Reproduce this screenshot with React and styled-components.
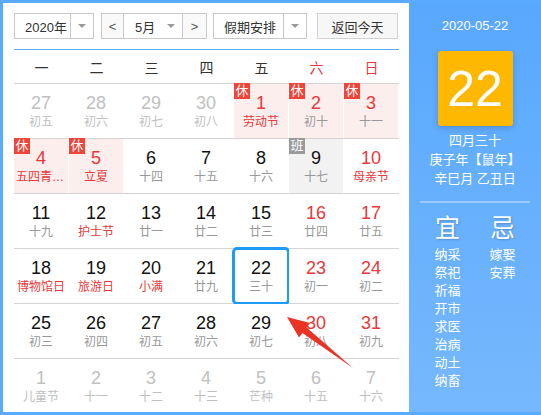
import React from 'react';
import styled, { createGlobalStyle } from 'styled-components';

const GlobalStyle = createGlobalStyle`
  html, body {
    margin: 0;
    padding: 0;
    background: #fff;
  }
  body {
    font-family: "Liberation Sans", "Noto Sans CJK SC", sans-serif;
  }
  * {
    box-sizing: border-box;
  }
`;

const BLUE = '#5aabff';
const RED = '#e8383a';

const Frame = styled.div`
  width: 541px;
  height: 415px;
  border: 3px solid ${BLUE};
  border-right: none;
  display: flex;
`;

const Main = styled.div`
  position: relative;
  width: 406px;
  height: 100%;
  background: #fff;
  padding: 10px 0 0 11px;
`;

const Toolbar = styled.div`
  display: flex;
  align-items: center;
  height: 26px;
  width: 385px;
`;

const SelectBox = styled.div`
  display: flex;
  height: 26px;
  width: ${(p) => p.$w}px;
  margin-right: ${(p) => p.$mr || 0}px;
  border: 1px solid #c9c9c9;
  background: #fff;
  font-size: 13px;
  color: #333;
`;

const SelectValue = styled.div`
  flex: 1;
  display: flex;
  align-items: center;
  padding-left: ${(p) => p.$pl || 10}px;
`;

const Caret = styled.div`
  width: ${(p) => p.$w || 23}px;
  display: flex;
  align-items: center;
  justify-content: center;
  border-left: ${(p) => (p.$inline ? 'none' : '1px solid #c9c9c9')};
  &::after {
    content: '';
    border-left: 4px solid transparent;
    border-right: 4px solid transparent;
    border-top: 4px solid #9a9a9a;
  }
`;

const NavBtn = styled.div`
  width: ${(p) => p.$w}px;
  display: flex;
  align-items: center;
  justify-content: center;
  background: #f9f9f9;
  color: #555;
  font-size: 13px;
  border-left: ${(p) => (p.$side === 'right' ? '1px solid #c9c9c9' : 'none')};
  border-right: ${(p) => (p.$side === 'left' ? '1px solid #c9c9c9' : 'none')};
`;

const TodayButton = styled.div`
  width: 81px;
  height: 26px;
  display: flex;
  align-items: center;
  justify-content: center;
  border: 1px solid #d2d2d2;
  background: #f7f7f7;
  color: #333;
  font-size: 13px;
`;

const Divider = styled.div`
  width: 385px;
  height: 1px;
  margin-top: 10px;
  background: ${BLUE};
`;

const WeekRow = styled.div`
  display: grid;
  grid-template-columns: repeat(7, 55px);
  width: 385px;
  height: 34px;
  border-bottom: 1px solid #d4d4d4;
`;

const WeekLabel = styled.div`
  display: flex;
  align-items: center;
  justify-content: center;
  font-size: 14px;
  color: ${(p) => (p.$weekend ? RED : '#333')};
`;

const DayRow = styled.div`
  display: grid;
  grid-template-columns: repeat(7, 55px);
  width: 385px;
  height: ${(p) => (p.$last ? 52 : 55)}px;
  border-bottom: ${(p) => (p.$last ? 'none' : '1px solid #d4d4d4')};
`;

const cellBg = (p) => {
  if (p.$rest) return '#fdeeee';
  if (p.$work) return '#f2f2f2';
  return '#fff';
};

const Cell = styled.div`
  position: relative;
  margin-right: 1px;
  padding-top: 9px;
  display: flex;
  flex-direction: column;
  align-items: center;
  background: ${cellBg};
  border-radius: ${(p) => (p.$today ? '3px' : '0')};
  outline: ${(p) => (p.$today ? '3px solid #1f9bf7' : 'none')};
  outline-offset: -1px;
  min-width: 0;
`;

const DayNum = styled.div`
  font-size: 18px;
  line-height: 20px;
  color: ${(p) => (p.$other ? '#c0c0c0' : p.$red ? RED : '#111')};
`;

const Lunar = styled.div`
  max-width: 100%;
  padding: 0 2px;
  font-size: 12px;
  line-height: 18px;
  white-space: nowrap;
  overflow: hidden;
  text-overflow: ellipsis;
  color: ${(p) => (p.$other ? '#c0c0c0' : p.$red ? RED : '#999')};
`;

const Badge = styled.span`
  position: absolute;
  top: -1px;
  left: 0;
  width: 16px;
  height: 16px;
  font-size: 13px;
  line-height: 16px;
  text-align: center;
  color: #fff;
  background: ${(p) => (p.$kind === 'work' ? '#9a9a9a' : '#f04438')};
`;

const Pointer = styled.svg`
  position: absolute;
  left: 0;
  top: 0;
  width: 406px;
  height: 409px;
  pointer-events: none;
`;

const Side = styled.div`
  width: 132px;
  height: 100%;
  background: linear-gradient(#58a8fe, #76b8fd);
  display: flex;
  flex-direction: column;
  align-items: center;
  color: #fff;
`;

const SideDate = styled.div`
  margin-top: 14px;
  font-size: 13px;
  line-height: 18px;
`;

const BigDay = styled.div`
  margin-top: 16px;
  width: 75px;
  height: 75px;
  border-radius: 3px;
  background: #ffb800;
  box-shadow: 0 2px 6px rgba(0, 0, 0, 0.18);
  display: flex;
  align-items: center;
  justify-content: center;
  font-size: 50px;
  color: #fff;
`;

const LunarInfo = styled.div`
  margin-top: 5px;
  font-size: 13px;
  line-height: 19px;
  text-align: center;
`;

const SideRule = styled.div`
  margin-top: 13px;
  width: 110px;
  height: 2px;
  background: rgba(255, 255, 255, 0.35);
`;

const Almanac = styled.div`
  display: flex;
  margin-top: 10px;
`;

const AlmanacCol = styled.div`
  width: 55px;
  display: flex;
  flex-direction: column;
  align-items: center;
`;

const AlmanacTitle = styled.div`
  font-size: 25px;
  line-height: 30px;
  text-shadow: 1px 1px 2px rgba(0, 0, 0, 0.2);
  margin-bottom: 3px;
`;

const AlmanacItem = styled.div`
  font-size: 13px;
  line-height: 18px;
`;

const weekdays = ['一', '二', '三', '四', '五', '六', '日'];

// o: other month, r: red number, lr: red lunar, b: badge, t: today
const rows = [
  [
    { d: 27, l: '初五', o: 1 },
    { d: 28, l: '初六', o: 1 },
    { d: 29, l: '初七', o: 1 },
    { d: 30, l: '初八', o: 1 },
    { d: 1, l: '劳动节', r: 1, lr: 1, b: 'rest' },
    { d: 2, l: '初十', r: 1, b: 'rest' },
    { d: 3, l: '十一', r: 1, b: 'rest' },
  ],
  [
    { d: 4, l: '五四青年节', r: 1, lr: 1, b: 'rest' },
    { d: 5, l: '立夏', r: 1, lr: 1, b: 'rest' },
    { d: 6, l: '十四' },
    { d: 7, l: '十五' },
    { d: 8, l: '十六' },
    { d: 9, l: '十七', b: 'work' },
    { d: 10, l: '母亲节', r: 1, lr: 1 },
  ],
  [
    { d: 11, l: '十九' },
    { d: 12, l: '护士节', lr: 1 },
    { d: 13, l: '廿一' },
    { d: 14, l: '廿二' },
    { d: 15, l: '廿三' },
    { d: 16, l: '廿四', r: 1 },
    { d: 17, l: '廿五', r: 1 },
  ],
  [
    { d: 18, l: '博物馆日', lr: 1 },
    { d: 19, l: '旅游日', lr: 1 },
    { d: 20, l: '小满', lr: 1 },
    { d: 21, l: '廿九' },
    { d: 22, l: '三十', t: 1 },
    { d: 23, l: '初一', r: 1 },
    { d: 24, l: '初二', r: 1 },
  ],
  [
    { d: 25, l: '初三' },
    { d: 26, l: '初四' },
    { d: 27, l: '初五' },
    { d: 28, l: '初六' },
    { d: 29, l: '初七' },
    { d: 30, l: '初八', r: 1 },
    { d: 31, l: '初九', r: 1 },
  ],
  [
    { d: 1, l: '儿童节', o: 1 },
    { d: 2, l: '十一', o: 1 },
    { d: 3, l: '十二', o: 1 },
    { d: 4, l: '十三', o: 1 },
    { d: 5, l: '芒种', o: 1 },
    { d: 6, l: '十五', o: 1 },
    { d: 7, l: '十六', o: 1 },
  ],
];

const yi = ['纳采', '祭祀', '祈福', '开市', '求医', '治病', '动土', '纳畜'];
const ji = ['嫁娶', '安葬'];

function Day({ day }) {
  return (
    <Cell $rest={day.b === 'rest'} $work={day.b === 'work'} $today={day.t}>
      {day.b && <Badge $kind={day.b}>{day.b === 'rest' ? '休' : '班'}</Badge>}
      <DayNum $other={day.o} $red={day.r}>{day.d}</DayNum>
      <Lunar $other={day.o} $red={day.lr}>{day.l}</Lunar>
    </Cell>
  );
}

export default function App() {
  return (
    <>
      <GlobalStyle />
      <Frame>
        <Main>
          <Toolbar>
            <SelectBox $w={80} $mr={7}>
              <SelectValue>2020年</SelectValue>
              <Caret />
            </SelectBox>
            <SelectBox $w={106} $mr={6}>
              <NavBtn $w={22} $side="left">&lt;</NavBtn>
              <SelectValue $pl={11}>5月</SelectValue>
              <Caret $inline $w={22} />
              <NavBtn $w={24} $side="right">&gt;</NavBtn>
            </SelectBox>
            <SelectBox $w={94} $mr={10}>
              <SelectValue>假期安排</SelectValue>
              <Caret />
            </SelectBox>
            <TodayButton>返回今天</TodayButton>
          </Toolbar>
          <Divider />
          <WeekRow>
            {weekdays.map((w, i) => (
              <WeekLabel key={w} $weekend={i > 4}>{w}</WeekLabel>
            ))}
          </WeekRow>
          {rows.map((row, ri) => (
            <DayRow key={ri} $last={ri === rows.length - 1}>
              {row.map((day, di) => (
                <Day key={di} day={day} />
              ))}
            </DayRow>
          ))}
          <Pointer viewBox="0 0 406 409">
            <polygon
              points="284,314 307,320 303.6,324.4 350,365 299.4,330 296,334.5"
              fill="#ea3324"
            />
          </Pointer>
        </Main>
        <Side>
          <SideDate>2020-05-22</SideDate>
          <BigDay>22</BigDay>
          <LunarInfo>
            <div>四月三十</div>
            <div>庚子年【鼠年】</div>
            <div>辛巳月 乙丑日</div>
          </LunarInfo>
          <SideRule />
          <Almanac>
            <AlmanacCol>
              <AlmanacTitle>宜</AlmanacTitle>
              {yi.map((t) => (
                <AlmanacItem key={t}>{t}</AlmanacItem>
              ))}
            </AlmanacCol>
            <AlmanacCol>
              <AlmanacTitle>忌</AlmanacTitle>
              {ji.map((t) => (
                <AlmanacItem key={t}>{t}</AlmanacItem>
              ))}
            </AlmanacCol>
          </Almanac>
        </Side>
      </Frame>
    </>
  );
}
